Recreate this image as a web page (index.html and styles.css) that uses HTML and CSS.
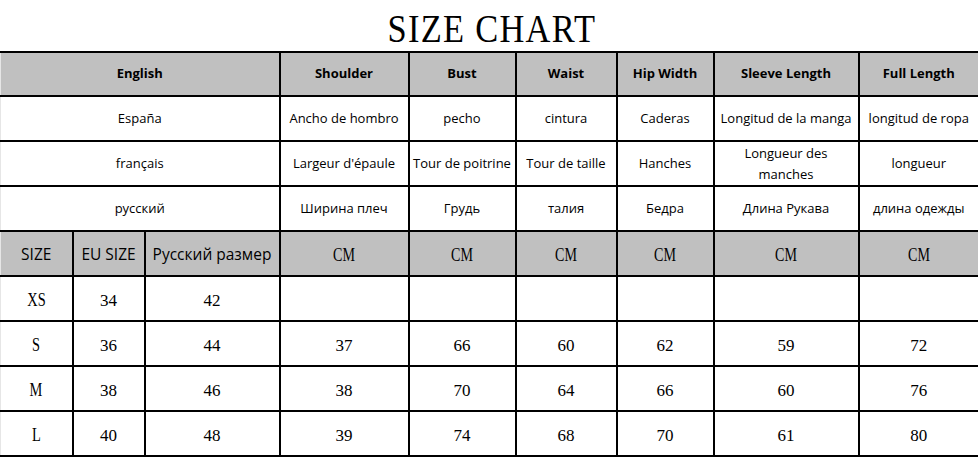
FILE: index.html
```html
<!DOCTYPE html>
<html>
<head>
<meta charset="utf-8">
<link rel="stylesheet" href="styles.css">
</head>
<body>
<div class="page">
  <h1 class="title"><span>SIZE CHART</span></h1>
  <table class="chart">
    <colgroup>
      <col class="c1"><col class="c2"><col class="c3"><col class="c4"><col class="c5"><col class="c6"><col class="c7"><col class="c8"><col class="c9">
    </colgroup>
    <tr class="head">
      <th colspan="3">English</th><th>Shoulder</th><th>Bust</th><th>Waist</th><th>Hip Width</th><th>Sleeve Length</th><th>Full Length</th>
    </tr>
    <tr class="lang">
      <td colspan="3">España</td><td>Ancho de hombro</td><td>pecho</td><td>cintura</td><td>Caderas</td><td>Longitud de la manga</td><td>longitud de ropa</td>
    </tr>
    <tr class="lang">
      <td colspan="3">français</td><td>Largeur d'épaule</td><td>Tour de poitrine</td><td>Tour de taille</td><td>Hanches</td><td>Longueur des manches</td><td>longueur</td>
    </tr>
    <tr class="lang">
      <td colspan="3">русский</td><td>Ширина плеч</td><td>Грудь</td><td>талия</td><td>Бедра</td><td>Длина Рукава</td><td>длина одежды</td>
    </tr>
    <tr class="units">
      <td class="sans">SIZE</td><td class="sans">EU SIZE</td><td class="sans">Русский размер</td>
      <td><span class="cond">CM</span></td><td><span class="cond">CM</span></td><td><span class="cond">CM</span></td><td><span class="cond">CM</span></td><td><span class="cond">CM</span></td><td><span class="cond">CM</span></td>
    </tr>
    <tr class="data">
      <td><span class="cond">XS</span></td><td>34</td><td>42</td><td></td><td></td><td></td><td></td><td></td><td></td>
    </tr>
    <tr class="data">
      <td><span class="cond">S</span></td><td>36</td><td>44</td><td>37</td><td>66</td><td>60</td><td>62</td><td>59</td><td>72</td>
    </tr>
    <tr class="data">
      <td><span class="cond">M</span></td><td>38</td><td>46</td><td>38</td><td>70</td><td>64</td><td>66</td><td>60</td><td>76</td>
    </tr>
    <tr class="data">
      <td><span class="cond">L</span></td><td>40</td><td>48</td><td>39</td><td>74</td><td>68</td><td>70</td><td>61</td><td>80</td>
    </tr>
  </table>
</div>
</body>
</html>
```

FILE: styles.css
```css
html, body {
  margin: 0;
  padding: 0;
  background: #fff;
}
.page {
  width: 978px;
  height: 457px;
  overflow: hidden;
}
.title {
  margin: 0;
  height: 51px;
  display: flex;
  align-items: center;
  justify-content: center;
  font-family: "Liberation Serif", serif;
  font-weight: normal;
  font-size: 40px;
  color: #000;
  letter-spacing: 1.5px;
}
.title span {
  display: inline-block;
  transform: scaleX(0.86);
  padding-top: 5px;
  padding-left: 6px;
}
.chart {
  width: 978px;
  table-layout: fixed;
  border-collapse: collapse;
  font-family: "Open Sans", "Noto Sans", sans-serif;
  font-size: 13px;
  color: #000;
}
.c1 { width: 72px; }
.c2 { width: 72px; }
.c3 { width: 135px; }
.c4 { width: 129px; }
.c5 { width: 107px; }
.c6 { width: 101px; }
.c7 { width: 97px; }
.c8 { width: 145px; }
.c9 { width: 120px; }
.chart th, .chart td {
  border: 2px solid #000;
  text-align: center;
  vertical-align: middle;
  padding: 0 2px;
  line-height: 21px;
  white-space: normal;
}
.chart tr > :first-child { border-left: 1px solid #e6e6e6; }
.chart tr > :last-child { border-right: 1px solid #e6e6e6; }
.chart tr { height: 45px; }
.chart tr.head { height: 44px; }
.head th {
  background: #c0c0c0;
  font-weight: bold;
  font-size: 13px;
  padding-bottom: 2px;
}
.lang td { font-size: 13px; }
.units td {
  background: #c0c0c0;
  font-family: "Liberation Serif", serif;
  font-size: 18px;
  padding-top: 3px;
}
.units td.sans {
  font-family: "Open Sans", "Noto Sans", sans-serif;
  font-size: 15.5px;
  padding-top: 1px;
}
.data td {
  font-family: "Liberation Serif", serif;
  font-size: 17px;
  padding-top: 3px;
}
.data .cond {
  transform: scaleX(0.8);
  font-size: 18px;
}
.cond {
  display: inline-block;
  transform: scaleX(0.78);
}
```
